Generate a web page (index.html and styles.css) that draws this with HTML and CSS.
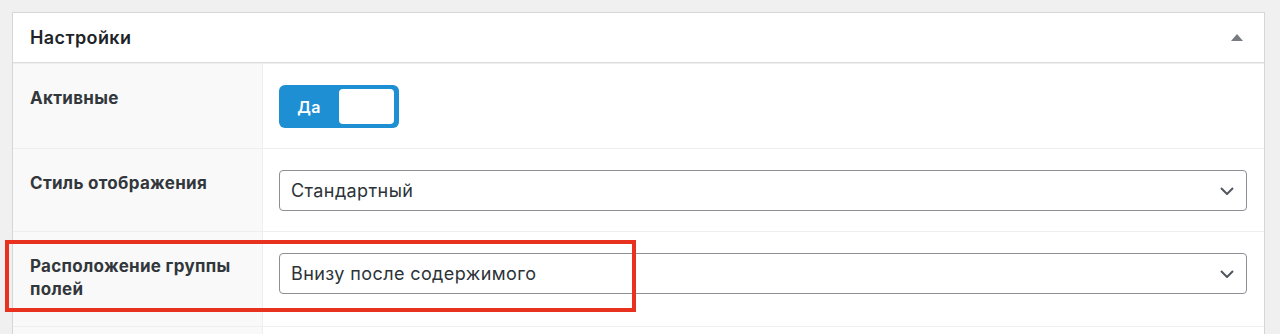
FILE: index.html
```html
<!DOCTYPE html>
<html lang="ru">
<head>
    <meta charset="UTF-8">
    <meta name="viewport" content="width=device-width, initial-scale=1.0">
    <title>Настройки</title>
    <link rel="stylesheet" href="styles.css">
</head>
<body>
    <div class="postbox">
        <div class="postbox-header">
            <h2>Настройки</h2>
            <span class="toggle-arrow"></span>
        </div>

        <div class="field-row">
            <div class="field-label">Активные</div>
            <div class="field-input">
                <div class="switch">
                    <span class="switch-on">Да</span>
                    <span class="switch-knob"></span>
                </div>
            </div>
        </div>

        <div class="field-row">
            <div class="field-label">Стиль отображения</div>
            <div class="field-input">
                <div class="select">
                    <span>Стандартный</span>
                    <svg class="chevron" width="14" height="8" viewBox="0 0 14 8"><path d="M1 1l6 6 6-6" fill="none" stroke="#50575e" stroke-width="2"/></svg>
                </div>
            </div>
        </div>

        <div class="field-row">
            <div class="field-label">Расположение группы полей</div>
            <div class="field-input">
                <div class="select">
                    <span>Внизу после содержимого</span>
                    <svg class="chevron" width="14" height="8" viewBox="0 0 14 8"><path d="M1 1l6 6 6-6" fill="none" stroke="#50575e" stroke-width="2"/></svg>
                </div>
            </div>
            <div class="highlight-frame"></div>
        </div>

        <div class="field-row field-row-tail">
            <div class="field-label"></div>
            <div class="field-input"></div>
        </div>
    </div>
</body>
</html>
```

FILE: styles.css
```css
* {
    margin: 0;
    padding: 0;
    box-sizing: border-box;
    font-family: 'Inter', 'Liberation Sans', sans-serif;
}

html, body {
    height: 334px;
    overflow: hidden;
}

body {
    background-color: #f0f0f1;
    color: #1d2327;
    padding: 12px 15px 0 12px;
}

.postbox {
    background: #fff;
    border: 1px solid #d5d6d8;
    border-bottom: none;
}

.postbox-header {
    display: flex;
    align-items: center;
    justify-content: space-between;
    padding: 13px 17px 12px 17px;
    border-bottom: 1px solid #dcdcde;
}

.postbox-header h2 {
    font-size: 18px;
    line-height: 24px;
    font-weight: 600;
    letter-spacing: 0.4px;
    color: #1d2327;
}

.toggle-arrow {
    width: 0;
    height: 0;
    border-left: 6px solid transparent;
    border-right: 6px solid transparent;
    border-bottom: 7px solid #787c82;
    margin-right: 4px;
    margin-top: -2px;
}

.field-row {
    display: flex;
    position: relative;
    border-top: 1px solid #eeeeee;
}

.field-row:first-of-type {
    border-top: none;
}

.field-label {
    width: 250px;
    flex-shrink: 0;
    background: #f9f9f9;
    border-right: 1px solid #eeeeee;
    padding: 23px 10px 25px 17px;
    font-size: 17px;
    line-height: 23px;
    font-weight: 700;
    letter-spacing: 0.3px;
    color: #32373c;
}

.field-input {
    flex: 1;
    padding: 21px 17px 20px 16px;
}

.switch {
    display: flex;
    align-items: center;
    width: 120px;
    height: 43px;
    background: #1d8fd2;
    border-radius: 6px;
    padding: 4px 4px 4px 0;
}

.switch-on {
    width: 60px;
    text-align: center;
    color: #fff;
    font-size: 16px;
    font-weight: 600;
    letter-spacing: 0.3px;
}

.switch-knob {
    width: 55px;
    height: 35px;
    background: #fff;
    border-radius: 4px;
}

.select {
    display: flex;
    align-items: center;
    justify-content: space-between;
    height: 41px;
    border: 1px solid #8c8f94;
    border-radius: 4px;
    padding: 0 12px 0 11px;
    font-size: 18px;
    letter-spacing: 0.4px;
    color: #2c3338;
}

.chevron {
    display: block;
}

.highlight-frame {
    position: absolute;
    left: -8px;
    top: 8px;
    width: 631px;
    height: 72px;
    border: 4px solid #e8321f;
}

.field-row-tail .field-label,
.field-row-tail .field-input {
    height: 8px;
    padding: 0;
}
```
